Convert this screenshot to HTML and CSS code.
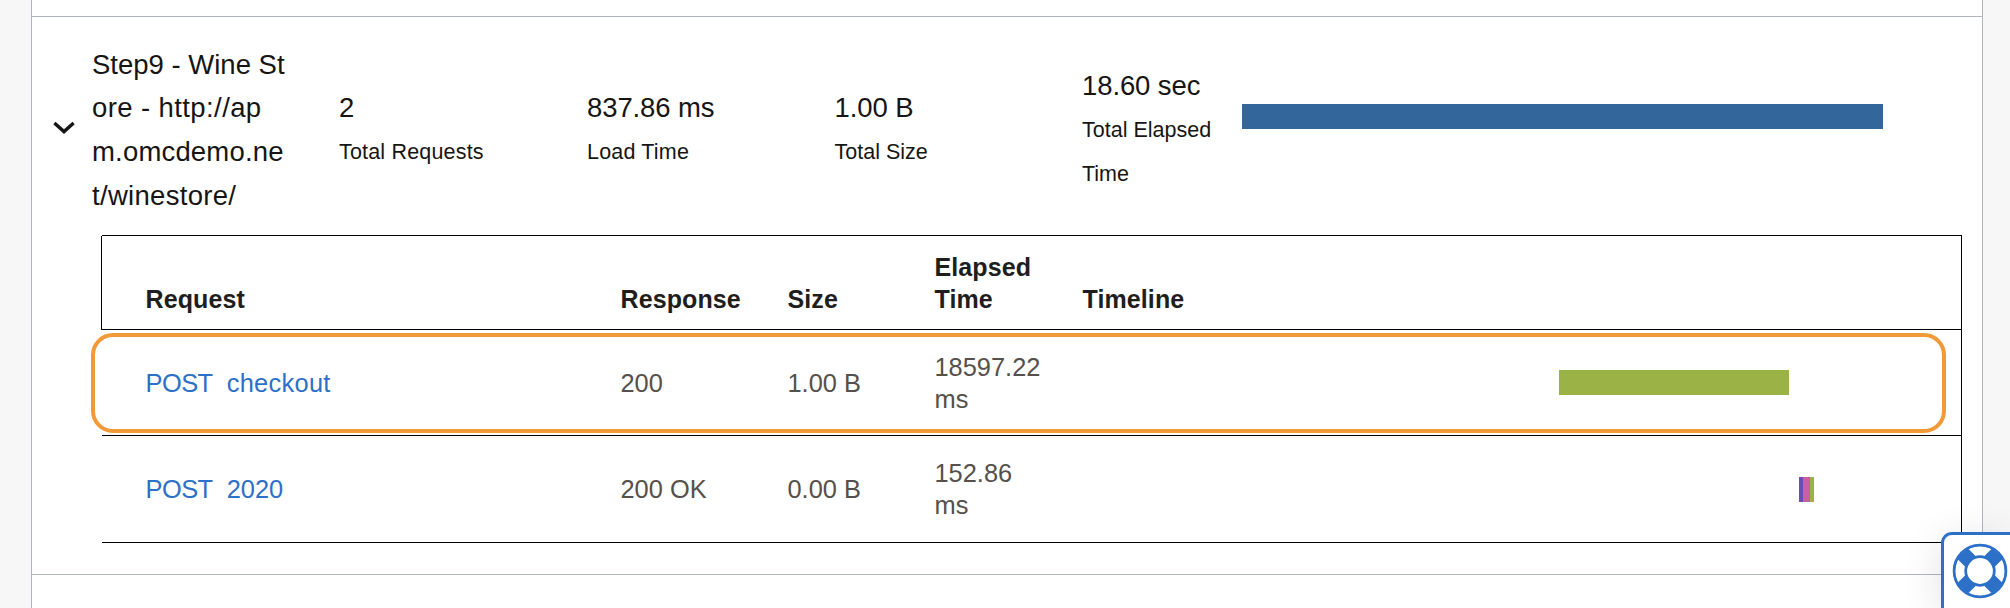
FILE: index.html
```html
<!DOCTYPE html>
<html lang="en">
<head>
<meta charset="utf-8">
<title>Session steps</title>
<link rel="stylesheet" href="styles.css">
</head>
<body>
<main class="panel">
  <div class="previous-step"></div>
  <section class="step">
    <header class="summary">
      <svg class="chevron" width="22" height="14" viewBox="0 0 22 14"><path d="M1.400 2 11 10.600 20.600 2" fill="none" stroke="#161513" stroke-width="3.400"/></svg>
      <div class="step-name"><div>Step9 - Wine St</div><div class="loose">ore - http://ap</div><div class="medium">m.omcdemo.ne</div><div class="wide">t/winestore/</div></div>
      <div class="metric"><div class="value">2</div><div class="label medium">Total Requests</div></div>
      <div class="metric"><div class="value">837.86 ms</div><div class="label medium">Load Time</div></div>
      <div class="metric"><div class="value">1.00 B</div><div class="label">Total Size</div></div>
      <div class="metric"><div class="value">18.60 sec</div><div class="label">Total Elapsed<br>Time</div></div>
      <div class="bar total"></div>
    </header>
    <div class="requests">
      <div class="row head">
        <div>Request</div><div>Response</div><div>Size</div><div>Elapsed<br>Time</div><div>Timeline</div>
      </div>
      <div class="row first">
        <div class="link"><span class="method">POST</span><span class="resource">checkout</span></div><div>200</div><div>1.00 B</div><div>18597.22<br>ms</div>
        <div class="track"><div class="bar checkout"></div></div>
        <div class="highlight"></div>
      </div>
      <div class="row last">
        <div class="link"><span class="method">POST</span><span>2020</span></div><div>200 OK</div><div>0.00 B</div><div>152.86<br>ms</div>
        <div class="track"><div class="bar phases"></div></div>
      </div>
    </div>
  </section>
</main>
<div class="help">
  <svg width="56" height="56" viewBox="-28 -28 56 56">
    <circle r="26" fill="#fff"/>
    <path d="M-17.500 -17.500 17.500 17.500M-17.500 17.500 17.500 -17.500" stroke="#2c70c8" stroke-width="15"/>
    <circle r="25.900" fill="none" stroke="#2c70c8" stroke-width="2.800"/>
    <circle r="14.300" fill="#fff" stroke="#2c70c8" stroke-width="2.800"/>
  </svg>
</div>
</body>
</html>
```
FILE: styles.css
```css
* { box-sizing: border-box; }
body {
  margin: 0;
  height: 608px;
  overflow: hidden;
  background: #f7f7f7;
  color: #161513;
  font-family: "Liberation Sans", Arial, sans-serif;
}
.panel {
  height: 608px;
  margin: 0 27px 0 31px;
  background: #fff;
  border: solid #b1b6be;
  border-width: 0 1px;
}
.previous-step { height: 17px; border-bottom: 1px solid #b1b6be; }
.step { height: 558px; border-bottom: 1px solid #b1b6be; }
.summary {
  display: grid;
  grid-template-columns: 60px 247px 248px 247.500px 247.500px 160px 641px;
  height: 218px;
  align-items: center;
}
.chevron { margin: 4px 0 0 20.500px; }
.step-name, .value { font-size: 27.500px; line-height: 43.700px; }
.step-name { padding-top: 8px; white-space: nowrap; }
.loose { letter-spacing: .4px; }
.medium { letter-spacing: .18px; }
.wide { letter-spacing: .3px; }
.value { letter-spacing: -.1px; }
.label { font-size: 21.500px; line-height: 44px; padding-top: 1px; white-space: nowrap; }
.metric { padding-top: 8px; }
.bar { height: 25px; }
.total { background: #33679b; margin-bottom: 20px; }
.requests {
  margin: 0 20px 0 70px;
  height: 308px;
  border: 1px solid #000;
  border-left: 0;
  font-size: 25.400px;
  line-height: 32px;
}
.row {
  position: relative;
  display: grid;
  grid-template-columns: 475px 167px 147px 148px 1fr;
  align-items: center;
  height: 106px;
  padding-left: 43.500px;
  border-bottom: 1px solid #000;
  color: #55504b;
}
.row.last { border-bottom: 0; }
.row.head {
  height: 94px;
  margin-left: -1px;
  padding: 0 0 14px 43.500px;
  border-left: 1px solid #000;
  align-items: end;
  color: #201e1c;
  font-size: 25px;
  font-weight: bold;
  letter-spacing: .1px;
}
.link { display: flex; gap: 14px; color: #2c70c8; }
.method { letter-spacing: -.5px; }
.resource { letter-spacing: .3px; }
.track { display: flex; }
.checkout { width: 230px; margin-left: 476.500px; background: #9bb346; }
.phases {
  width: 15px;
  margin-left: 716.500px;
  background: linear-gradient(90deg, #6c4cb8 3.500px, #cb5fa0 3.500px 11.500px, #9bb346 11.500px);
}
.highlight {
  position: absolute;
  left: -11px;
  top: 3px;
  width: 1855px;
  height: 100px;
  border: 4px solid #f29a38;
  border-radius: 22px;
}
.help {
  position: absolute;
  right: 0;
  bottom: 0;
  width: 69px;
  height: 76px;
  background: #fff;
  border: solid #2c70c8;
  border-width: 3px 0 0 3px;
  border-radius: 11px 0 0 0;
  padding: 8px 0 0 8px;
  box-shadow: 0 8px 40px rgba(0, 0, 0, .12);
}
```
